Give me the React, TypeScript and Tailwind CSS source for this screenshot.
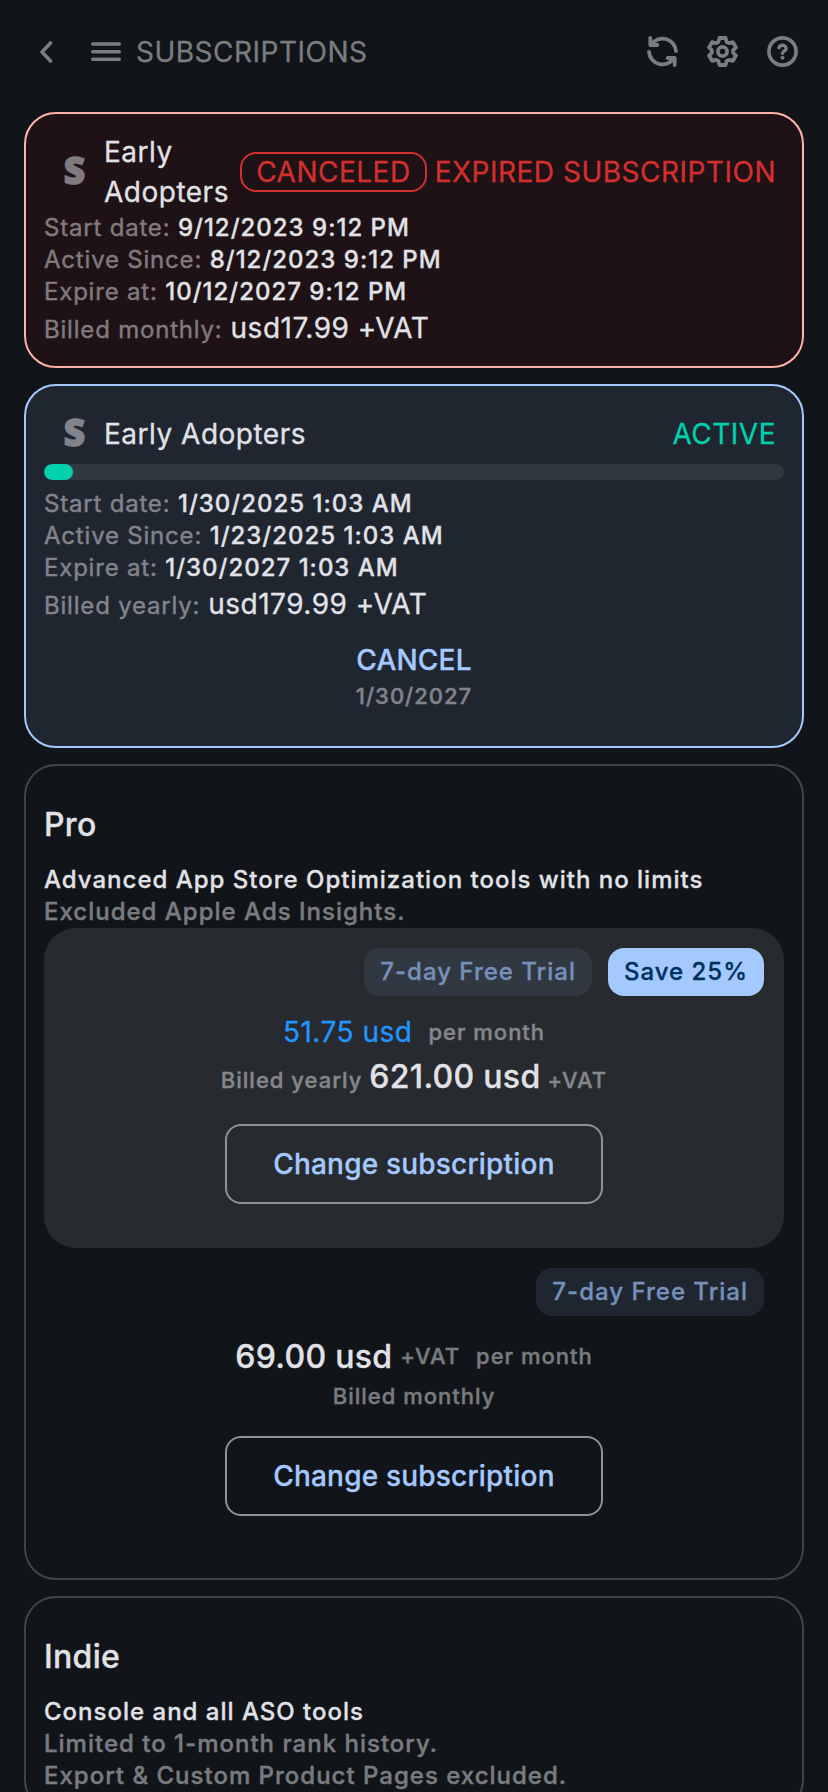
import type { ReactNode } from "react";

export default function App() {
  return (
    <div className="h-[1792px] w-[828px] overflow-hidden bg-[#111418] font-['Inter',sans-serif] text-[28px] leading-10 tracking-[0.5px] text-[#e1e2e8] [-webkit-text-stroke:0.3px]">
      <Header />
      <main className="flex flex-col gap-4 px-6">
        <section className="rounded-[32px] border-2 border-[#ffb4ab] bg-[#1f1216] p-[18px]">
          <div className="flex items-center pr-2">
            <Logo />
            <span className="flex-1">Early Adopters</span>
            <span className="mr-2 rounded-2xl border-2 border-[#d32f2f] px-[14px] leading-9 text-[#d32f2f]">
              CANCELED
            </span>
            <span className="whitespace-nowrap text-[#d32f2f]">EXPIRED SUBSCRIPTION</span>
          </div>
          <Detail label="Start date:" value="9/12/2023 9:12 PM" />
          <Detail label="Active Since:" value="8/12/2023 9:12 PM" />
          <Detail label="Expire at:" value="10/12/2027 9:12 PM" />
          <Billing label="Billed monthly:" value="usd17.99 +VAT" />
        </section>

        <section className="rounded-[32px] border-2 border-[#a4c9fe] bg-[#202630] p-[18px]">
          <div className="flex h-[60px] items-center pr-2">
            <Logo />
            <span className="flex-1">Early Adopters</span>
            <span className="text-[#00d1ac]">ACTIVE</span>
          </div>
          <div className="mb-2 h-4 overflow-hidden rounded-full bg-[#323841]">
            <div className="h-full w-[29px] rounded-full bg-[#00d1ac]" />
          </div>
          <Detail label="Start date:" value="1/30/2025 1:03 AM" />
          <Detail label="Active Since:" value="1/23/2025 1:03 AM" />
          <Detail label="Expire at:" value="1/30/2027 1:03 AM" />
          <Billing label="Billed yearly:" value="usd179.99 +VAT" />
          <div className="flex flex-col items-center py-4">
            <button className="font-medium tracking-[0.2px] text-[#a4c9fe]">CANCEL</button>
            <Small>1/30/2027</Small>
          </div>
        </section>

        <Plan name="Pro" summary="Advanced App Store Optimization tools with no limits" notes={["Excluded Apple Ads Insights."]}>
          <Offer highlighted>
            <div className="flex items-center justify-center gap-4">
              <span className="text-[#2196ff]">51.75 usd</span>
              <Small>per month</Small>
            </div>
            <div className="flex h-12 items-baseline justify-center gap-[7px] pt-px leading-[48px]">
              <Small>Billed yearly</Small>
              <span className="text-[32px] font-medium tracking-[0.3px]">621.00 usd</span>
              <Small>+VAT</Small>
            </div>
          </Offer>
          <Offer>
            <div className="flex h-12 items-center justify-center">
              <span className="mr-2 mt-0.5 text-[32px] font-medium tracking-[0.3px]">69.00 usd</span>
              <Small>+VAT</Small>
              <span className="w-4" />
              <Small>per month</Small>
            </div>
            <div className="flex justify-center">
              <Small>Billed monthly</Small>
            </div>
          </Offer>
        </Plan>

        <Plan
          name="Indie"
          summary="Console and all ASO tools"
          notes={["Limited to 1-month rank history.", "Export & Custom Product Pages excluded."]}
        />
      </main>
    </div>
  );
}

function Header() {
  return (
    <header className="mb-2 flex h-[104px] items-center pl-10 pr-[30px] text-[#7b7d81]">
      <svg width="13" height="22" viewBox="0 0 13 22" fill="none" stroke="currentColor" strokeWidth="3.6" strokeLinecap="round" strokeLinejoin="round">
        <path d="M10.5 2 2 11l8.5 9" />
      </svg>
      <svg className="ml-[38px]" width="30" height="20" viewBox="0 0 30 20" fill="none" stroke="currentColor" strokeWidth="3.4" strokeLinecap="round">
        <path d="M1.7 2h26.6M1.7 9.7h26.6M1.7 17.3h26.6" />
      </svg>
      <h1 className="ml-[15px] flex-1">SUBSCRIPTIONS</h1>
      <div className="mb-px flex gap-[29px]">
        <svg width="31" height="31" viewBox="0 0 31 31" fill="none" stroke="currentColor" strokeWidth="3.8" strokeLinecap="round" strokeLinejoin="round">
          <path d="M3.3 2v7h7M4.2 8.7A13.5 13.5 0 0 1 29 15.2" />
          <path d="M27.7 29v-7h-7M26.8 22.3A13.5 13.5 0 0 1 2 15.8" />
        </svg>
        <svg width="31" height="31" viewBox="0 0.5 31 31" fill="none" stroke="currentColor" strokeWidth="3.8" strokeLinejoin="round">
          <path d="M12.5 2.5h6l1.2 4 2.2 1.2 4-1 3 5.2-2.8 2.9v2.4l2.8 2.900-3 5.200-4-1-2.200 1.200-1.200 4h-6l-1.200-4-2.200-1.200-4 1-3-5.200 2.800-2.900v-2.400l-2.800-2.900 3-5.200 4 1 2.200-1.200z" />
          <circle cx="15.5" cy="16" r="4.6" />
        </svg>
        <svg width="31" height="31" viewBox="0 0 31 31" fill="none" stroke="currentColor" strokeWidth="3.6" strokeLinecap="round" strokeLinejoin="round">
          <circle cx="15.5" cy="15.5" r="13.6" />
          <path d="M12 11.7c.5-1.500 1.900-2.400 3.500-2.400 2 0 3.600 1.300 3.600 3.100 0 2.500-3.600 2.700-3.600 4.900" strokeWidth="3.4" />
          <circle cx="15.5" cy="21.8" r="2" fill="currentColor" stroke="none" />
        </svg>
      </div>
    </header>
  );
}

function Logo() {
  return (
    <span className="mb-1 flex w-[60px] shrink-0 justify-end pr-[19px] font-['Open_Sans',sans-serif] text-[37px] font-extrabold tracking-normal opacity-50 [-webkit-text-stroke:1.4px]">
      S
    </span>
  );
}

function Detail({ label, value }: { label: string; value: string }) {
  return (
    <div className="text-2xl leading-8 tracking-[0.8px]">
      <span className="opacity-50">{label}</span> <span className="font-medium tracking-[1px]">{value}</span>
    </div>
  );
}

function Billing({ label, value }: { label: string; value: string }) {
  return (
    <div className="flex h-10 items-baseline gap-2">
      <span className="text-2xl leading-10 tracking-[0.8px] opacity-50">{label}</span>
      <span>{value}</span>
    </div>
  );
}

function Small({ children }: { children: ReactNode }) {
  return <span className="text-[22px] font-medium leading-8 tracking-[1px] opacity-50">{children}</span>;
}

function Plan({
  name,
  summary,
  notes,
  children,
}: {
  name: string;
  summary: string;
  notes: string[];
  children?: ReactNode;
}) {
  return (
    <section className="rounded-[32px] border-2 border-[#424548] p-[18px] text-2xl font-medium leading-8 tracking-[1px]">
      <h2 className="mb-[15px] mt-[17px] text-[32px] leading-[48px] tracking-[0.3px]">{name}</h2>
      <p>{summary}</p>
      {notes.map((note) => (
        <p key={note} className="opacity-50">
          {note}
        </p>
      ))}
      {children}
    </section>
  );
}

function Offer({ highlighted = false, children }: { highlighted?: boolean; children: ReactNode }) {
  return (
    <div className={highlighted ? "h-80 rounded-[32px] bg-[#272a2e] p-5" : "h-[312px] p-5"}>
      <div className="mb-4 flex justify-end gap-4">
        <span className={`rounded-2xl px-4 leading-[48px] text-[#7591bb] ${highlighted ? "bg-[#323841]" : "bg-[#202630]"}`}>
          7-day Free Trial
        </span>
        {highlighted && <span className="rounded-2xl bg-[#a4c9fe] px-4 leading-[48px] text-[#00315c]">Save 25%</span>}
      </div>
      <div className="text-[28px] font-normal leading-10 tracking-[0.5px]">{children}</div>
      <div className="mt-6 flex justify-center">
        <button className="h-20 rounded-2xl border-2 border-[#8d9199] px-[46px] text-[28px] tracking-[0.2px] text-[#a4c9fe]">
          Change subscription
        </button>
      </div>
    </div>
  );
}
